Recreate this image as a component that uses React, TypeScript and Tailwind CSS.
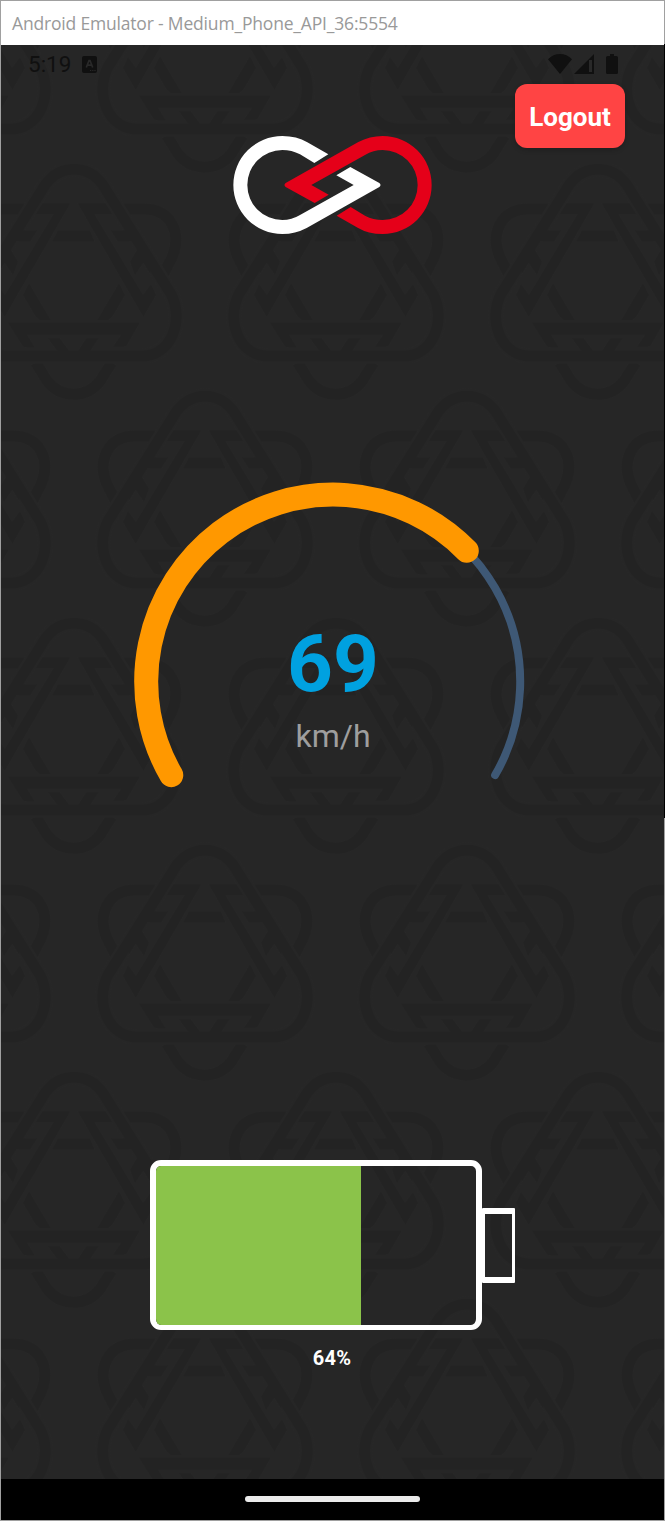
import React from "react";

const SPEED = 69;
const MAX_SPEED = 100;
const CHARGE = 64;

const TRIANGLE =
  "M353 28C312 28 280 50 258 88L62 402C22 480 60 588 150 588H556C646 588 684 480 644 402L448 88C426 50 394 28 353 28Z";

function BackgroundPattern() {
  return (
    <svg className="absolute inset-0 h-full w-full" aria-hidden="true">
      <defs>
        <g id="under" fill="#232323">
          <path d="M252 130H342L145 470L107 405L122 372L146 405L292 162H232Z" />
          <path d="M218 370L283 480H250Q240 475 232 460L200 405Z" />
          <path
            d="M205 147H145C60 147 30 220 58 290L84 341"
            fill="none"
            stroke="#232323"
            strokeWidth="33"
          />
        </g>
        <g id="joined" fill="#232323">
          <path d="M150 244H222L243 211H190Z" />
          <path d="M148 244L185 305L170 345L145 308L125 340L110 310Z" />
        </g>
        <g id="emblem" transform="scale(0.3333) translate(-353 -12)">
          <use href="#under" />
          <use href="#under" transform="translate(706 0) scale(-1 1)" />
          <path
            d="M238 608L272 662C312 716 392 716 432 662L466 608"
            fill="none"
            stroke="#232323"
            strokeWidth="33"
          />
          <path d={TRIANGLE} fill="none" stroke="#262626" strokeWidth="45" />
          <path d={TRIANGLE} fill="none" stroke="#232323" strokeWidth="33" />
          <use href="#joined" />
          <use href="#joined" transform="translate(706 0) scale(-1 1)" />
          <g fill="#232323">
            <path d="M305 211H400L414 244H288Z" />
            <path d="M155 488H550L512 555Q508 560 500 560H470L495 524H212L235 562H210Q200 562 195 552Z" />
            <path d="M275 535H310L353 592L390 535H427L400 575H305Z" />
          </g>
        </g>
        <pattern id="tiles" x="73" y="119" width="262" height="454" patternUnits="userSpaceOnUse">
          <use href="#emblem" x="0" y="0" />
          <use href="#emblem" x="262" y="0" />
          <use href="#emblem" x="131" y="227" />
          <use href="#emblem" x="131" y="-227" />
        </pattern>
      </defs>
      <rect width="100%" height="100%" fill="url(#tiles)" />
    </svg>
  );
}

function StatusBar() {
  return (
    <div className="flex h-[39px] items-center justify-between pb-px pl-[27px] pr-[46px] text-[#101010]">
      <div className="flex items-center gap-[11px]">
        <span className="text-[22.5px] leading-none">5:19</span>
        <svg width="15" height="17" viewBox="0 0 15 17">
          <rect width="15" height="17" rx="2" fill="currentColor" />
          <path
            d="M4.3 11.5L7 4.5H8L10.7 11.5M5.3 9.2H9.7"
            fill="none"
            stroke="#292929"
            strokeWidth="1.7"
          />
          <path d="M8 14.5H14" stroke="#292929" strokeWidth="1.2" strokeDasharray="1.2 1" />
        </svg>
      </div>
      <div className="flex items-center">
        <svg width="24" height="20" viewBox="0 0 24 20">
          <path d="M12 20L0 5.3C6.5-1.7 17.5-1.7 24 5.3Z" fill="currentColor" />
        </svg>
        <svg className="ml-[2px]" width="20" height="20" viewBox="0 0 20 20">
          <path d="M20 0V20H0Z" fill="currentColor" />
          <rect x="15" y="6" width="3" height="12" fill="#292929" />
        </svg>
        <svg className="ml-[12px]" width="12" height="20" viewBox="0 0 12 20">
          <path
            d="M4 0H8V2H10.5Q12 2 12 3.500V18.500Q12 20 10.500 20H1.500Q0 20 0 18.500V3.500Q0 2 1.500 2H4Z"
            fill="currentColor"
          />
        </svg>
      </div>
    </div>
  );
}

function Logo() {
  const link =
    "M325 103L262 67Q230 48 187 48A147 147 0 0 0 187 342Q226 342 260 324L478 201Q485 195 478 189L391 141L349 166L401 195L240 285Q215 300 187 300A105 105 0 0 1 187 90Q215 90 240 103L283 129Z";
  return (
    <svg className="self-end" width="199" height="98" viewBox="39 48 597 294">
      <path d={link} fill="#ffffff" />
      <path d={link} fill="#e50019" transform="rotate(180 337.5 195)" />
    </svg>
  );
}

function Gauge() {
  const r = 187;
  const point = (deg: number) => {
    const a = (deg * Math.PI) / 180;
    return `${199.2 + r * Math.cos(a)} ${198.6 + r * Math.sin(a)}`;
  };
  const end = 150 + (SPEED / MAX_SPEED) * 240;
  return (
    <div className="relative mt-[249px] h-[305px] w-[398px] self-center">
      <svg className="overflow-visible" width="398" height="305" viewBox="0 0 398 305">
        <path
          d={`M${point(150)}A${r} ${r} 0 1 1 ${point(390)}`}
          fill="none"
          stroke="#3e5875"
          strokeWidth="8"
          strokeLinecap="round"
        />
        <path
          d={`M${point(150)}A${r} ${r} 0 ${end - 150 > 180 ? 1 : 0} 1 ${point(end)}`}
          fill="none"
          stroke="#ff9800"
          strokeWidth="24"
          strokeLinecap="round"
        />
      </svg>
      <div className="absolute inset-x-0 top-[134px] flex flex-col items-center pl-px">
        <span className="text-[80px] font-bold leading-[94px] text-[#00a1e0]">{SPEED}</span>
        <span className="mt-[6px] text-[32px] leading-[38px] text-[#9e9e9e]">km/h</span>
      </div>
    </div>
  );
}

function Battery() {
  return (
    <div className="mt-[372px] flex items-center self-center">
      <div className="h-[170px] w-[332px] overflow-hidden rounded-[11px] border-[6px] border-b-[5px] border-white">
        <div className="h-full bg-[#8bc34a]" style={{ width: `${CHARGE}%` }} />
      </div>
      <div className="h-[75px] w-[33px] rounded-[1px] border-x-[3px] border-y-[6px] border-white" />
    </div>
  );
}

export default function App() {
  return (
    <div className="relative flex h-[1521px] w-[665px] flex-col border border-[#a0a0a0] bg-black">
      <div className="absolute -right-px top-[43px] h-[774px] w-px bg-black" />
      <div className="flex h-[44px] shrink-0 items-center bg-white pl-[11px]">
        <span className="whitespace-nowrap font-['Open_Sans','Noto_Sans',sans-serif] text-[17.5px] tracking-[-0.18px] text-[#999999]">
          Android Emulator - Medium_Phone_API_36:5554
        </span>
      </div>
      <main className="relative h-[1434px] shrink-0 overflow-hidden bg-[#262626] font-[Roboto,sans-serif]">
        <BackgroundPattern />
        <div className="relative flex h-full flex-col">
          <StatusBar />
          <div className="grid h-[150px] grid-cols-[1fr_199px_1fr]">
            <div />
            <Logo />
            <button className="mr-[39px] h-[64px] w-[110px] justify-self-end rounded-[12px] bg-[#ff4444] pt-[2px] text-[26px] font-bold text-white shadow-[0_2px_5px_rgba(0,0,0,0.2)]">
              Logout
            </button>
          </div>
          <Gauge />
          <Battery />
          <span className="mt-[16px] self-center pr-px text-[20px] font-bold leading-[24px] tracking-[0.2px] text-white">
            {CHARGE}%
          </span>
        </div>
      </main>
      <div className="flex flex-1 items-center justify-center pb-[2px]">
        <div className="h-[6px] w-[175px] rounded-full bg-[#ebebeb]" />
      </div>
    </div>
  );
}
